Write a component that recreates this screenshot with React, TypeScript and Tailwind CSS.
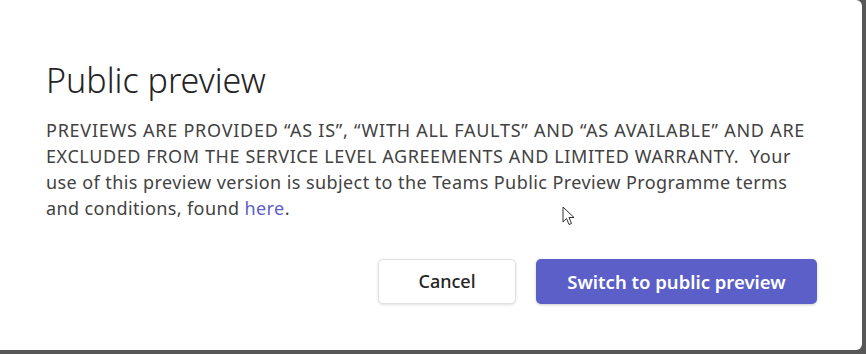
import React from "react";

export default function App() {
  return (
    <div
      className="w-[866px] h-[354px] bg-[#575757] flex items-start overflow-hidden"
      style={{ fontFamily: '"Noto Sans", "Open Sans", sans-serif' }}
    >
      <div className="relative w-[862px] h-[350px] bg-white rounded-tr-[6px] rounded-br-[6px] flex flex-col pl-[46px] pr-[45px] pt-[58px]">
        <h1 className="text-[34px] leading-[44px] font-light text-[#242424]">
          Public preview
        </h1>
        <p className="mt-[15px] text-[18px] leading-[26px] text-[#424242] whitespace-nowrap">
          <span className="tracking-[0.75px]">
            PREVIEWS ARE PROVIDED “AS IS”, “WITH ALL FAULTS” AND “AS AVAILABLE” AND ARE
          </span>
          <br />
          <span className="tracking-[0.6px]">
            EXCLUDED FROM THE SERVICE LEVEL AGREEMENTS AND LIMITED WARRANTY.&nbsp; Your
          </span>
          <br />
          <span className="tracking-[0.42px]">
            use of this preview version is subject to the Teams Public Preview Programme terms
          </span>
          <br />
          <span className="tracking-[0.4px]">
            and conditions, found <a className="text-[#5b5fc7]">here</a>.
          </span>
        </p>
        <div className="flex justify-end gap-[20px] mt-[38px]">
          <button className="w-[138px] h-[45px] rounded-[5px] border border-[#e0e0e0] bg-white text-[18px] font-medium text-[#242424] shadow-[0_1px_3px_rgba(0,0,0,0.12)]">
            Cancel
          </button>
          <button className="w-[281px] h-[45px] rounded-[5px] bg-[#5b5fc7] text-[18.5px] font-semibold text-white shadow-[0_1px_3px_rgba(0,0,0,0.2)]">
            Switch to public preview
          </button>
        </div>
        <svg
          className="absolute left-[562px] top-[206px]"
          width="14"
          height="21"
          viewBox="0 0 14 21"
        >
          <path
            d="M1 1 L1 16 L4.5 12.5 L7 18.5 L9.5 17.5 L7 11.5 L12 11.5 Z"
            fill="white"
            stroke="#333"
            strokeWidth="1"
            strokeLinejoin="round"
          />
        </svg>
      </div>
    </div>
  );
}
